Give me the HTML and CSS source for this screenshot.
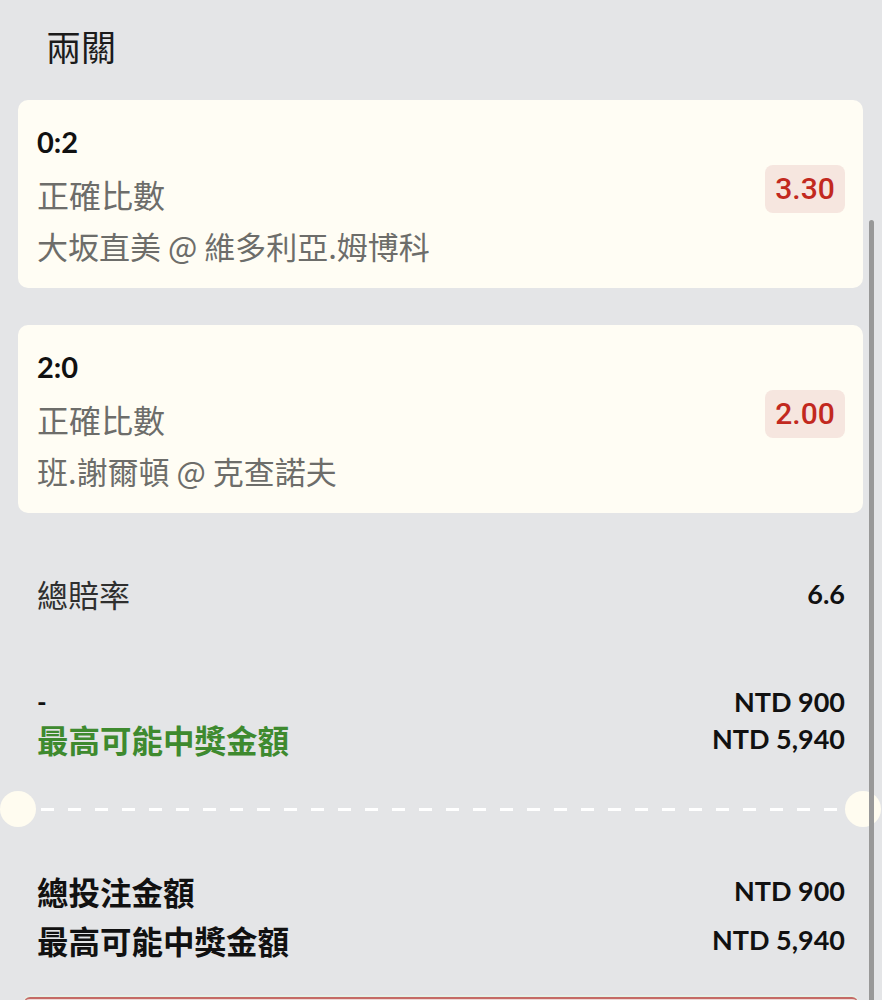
FILE: index.html
```html
<!DOCTYPE html>
<html lang="zh-Hant">
<head>
<meta charset="utf-8">
<title>兩關</title>
<link rel="stylesheet" href="styles.css">
</head>
<body>
<div class="page">
  <h1 class="title">兩關</h1>

  <div class="card">
    <div class="card-info">
      <div class="score">0:2</div>
      <div class="market">正確比數</div>
      <div class="match">大坂直美 @ 維多利亞.姆博科</div>
    </div>
    <div class="odds">3.30</div>
  </div>

  <div class="card">
    <div class="card-info">
      <div class="score">2:0</div>
      <div class="market">正確比數</div>
      <div class="match">班.謝爾頓 @ 克查諾夫</div>
    </div>
    <div class="odds">2.00</div>
  </div>

  <div class="section">
    <div class="row total-odds">
      <span class="label-soft">總賠率</span>
      <span class="value">6.6</span>
    </div>

    <div class="pair">
      <span class="dash-label">-</span>
      <span class="value">NTD 900</span>
      <span class="win-label">最高可能中獎金額</span>
      <span class="value">NTD 5,940</span>
    </div>
  </div>
</div>

<div class="divider">
  <span class="notch"></span>
  <span class="dashes"></span>
  <span class="notch"></span>
</div>

<div class="page">
  <div class="section summary">
    <span class="label-strong">總投注金額</span>
    <span class="value">NTD 900</span>
    <span class="label-strong">最高可能中獎金額</span>
    <span class="value">NTD 5,940</span>
  </div>
</div>

<div class="submit"></div>

<div class="scrollbar"></div>
</body>
</html>
```

FILE: styles.css
```css
html, body {
  margin: 0;
  padding: 0;
}

body {
  background: #e4e5e7;
  font-family: "Lato", "Noto Sans CJK TC", sans-serif;
  color: #111;
  overflow: hidden;
}

.page {
  padding: 0 19px 0 18px;
}

.section {
  padding: 0 18px 0 19px;
}

.title {
  margin: 0 0 37px 28px;
  padding-top: 29px;
  font-family: "Noto Sans CJK TC", sans-serif;
  font-size: 35px;
  line-height: 34px;
  font-weight: 400;
  color: #1b1b1b;
}

.card {
  display: flex;
  align-items: center;
  justify-content: space-between;
  background: #fffdf4;
  border-radius: 10px;
  padding: 16px 18px 16px 19px;
  margin-bottom: 37px;
}

.card-info {
  display: flex;
  flex-direction: column;
}

.score {
  font-size: 29px;
  font-weight: 700;
  line-height: 52px;
  color: #111;
}

.market,
.match {
  font-family: "Noto Sans CJK TC", sans-serif;
  font-size: 32px;
  line-height: 52px;
  color: #6d6d6a;
}

.match {
  font-size: 31px;
}

.odds {
  font-family: "Roboto", "Liberation Sans", sans-serif;
  font-size: 30px;
  font-weight: 500;
  color: #c2291e;
  background: #f6e6df;
  border-radius: 8px;
  width: 80px;
  height: 48px;
  line-height: 48px;
  text-align: center;
  margin-bottom: 10px;
}

.row {
  display: flex;
  justify-content: space-between;
  align-items: center;
}

.total-odds {
  margin-top: 60px;
  height: 40px;
}

.label-soft {
  font-size: 31px;
  color: #2f2f2f;
}

.value {
  font-size: 27px;
  font-weight: 700;
  color: #111;
  text-align: right;
}

.pair {
  display: grid;
  grid-template-columns: 1fr auto;
  grid-auto-rows: 37px;
  align-items: center;
  margin-top: 70px;
}

.dash-label {
  font-size: 26px;
  font-weight: 700;
}

.win-label {
  font-size: 31.5px;
  font-weight: 700;
  color: #3e8a2f;
}

.divider {
  display: flex;
  align-items: center;
  margin-top: 34px;
  height: 36px;
  width: 881px;
}

.notch {
  width: 36px;
  height: 36px;
  border-radius: 50%;
  background: #fffcf0;
  flex: none;
}

.dashes {
  flex: 1;
  height: 3px;
  margin: 0 2px 0 5px;
  background: repeating-linear-gradient(to right, #ffffff 0 13px, transparent 13px 27px);
}

.summary {
  display: grid;
  grid-template-columns: 1fr auto;
  grid-auto-rows: 49px;
  align-items: center;
  margin-top: 39px;
}

.label-strong {
  font-size: 31.5px;
  font-weight: 700;
  color: #111;
}

.submit {
  margin: 33px 24px 0 24px;
  height: 20px;
  border-top: 2px solid #c46a66;
  border-radius: 6px 6px 0 0;
  background: #efd8d6;
  box-shadow: 0 -2px 0 #e6efe6;
}

.scrollbar {
  position: fixed;
  right: 8px;
  top: 220px;
  bottom: 0;
  width: 5px;
  border-radius: 3px 3px 0 0;
  background: #989898;
}
```
